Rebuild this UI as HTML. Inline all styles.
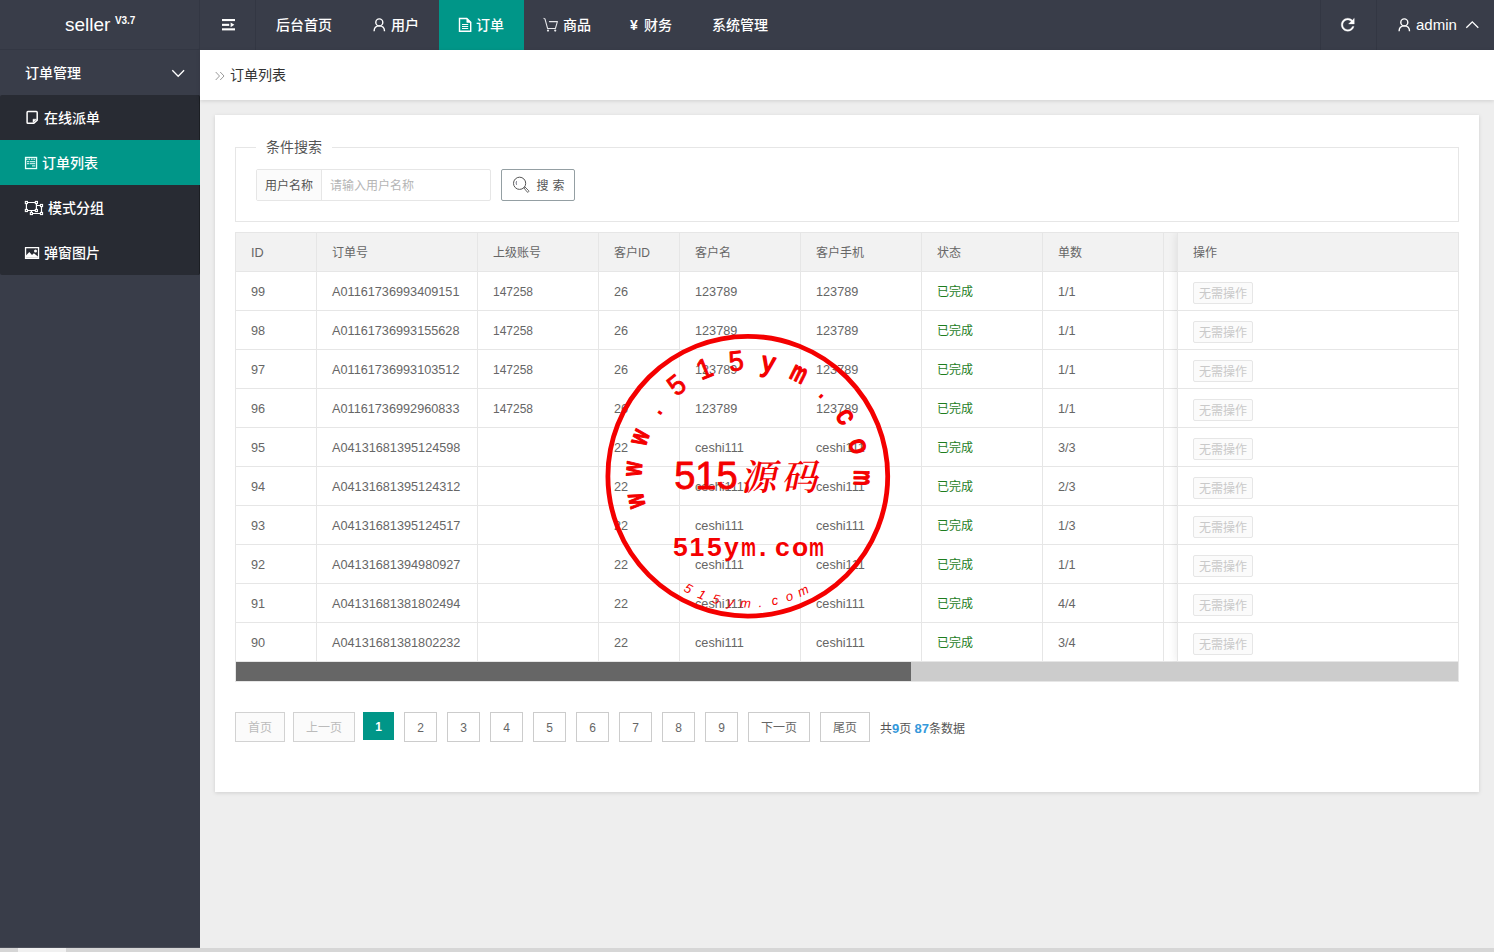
<!DOCTYPE html>
<html lang="zh-CN">
<head>
<meta charset="utf-8">
<title>seller V3.7 - 订单列表</title>
<style>
*{box-sizing:border-box;margin:0;padding:0}
html,body{width:1494px;height:952px;overflow:hidden}
body{position:relative;background:#eeeeee;font-family:"Liberation Sans","Noto Sans CJK SC",sans-serif;font-size:14px;color:#555;-webkit-font-smoothing:antialiased}
svg{display:block}
/* header */
#hd{position:absolute;left:0;top:0;width:1494px;height:50px;background:#393D49}
#logo{position:absolute;left:0;top:0;width:200px;height:50px;color:#fff;border-right:1px solid #333743;border-bottom:1px solid #333743}
#logo .nm{position:absolute;left:65px;top:12px;font-size:19px;line-height:26px;letter-spacing:0}
#logo .ver{position:absolute;left:115px;top:14px;font-size:10px;line-height:14px;font-weight:bold;letter-spacing:-0.1px}
#tog{position:absolute;left:200px;top:0;width:56px;height:50px;border-right:1px solid #333743}
.nv{position:absolute;top:0;height:50px;line-height:50px;color:#fff;font-size:14px;white-space:nowrap;font-weight:500}
.nv.on{background:#009688}
.nv svg{position:absolute}
.nv span{position:absolute;top:0}
#rf{position:absolute;left:1320px;top:0;width:57px;height:50px;border-left:1px solid #333743;border-right:1px solid #333743}
/* sidebar */
#sd{position:absolute;left:0;top:50px;width:200px;height:898px;background:#393D49;border-bottom:1px solid #4b4e59}
#sd .grp{position:absolute;left:0;top:0;width:200px;height:45px;line-height:45px;color:#fff;font-size:14px;font-weight:500}
#sd .grp span{position:absolute;left:25px;top:1px}
#sd .sub{position:absolute;left:0;top:45px;width:200px;height:180px;background:#282B33;border-radius:2px;border-right:1px solid rgba(0,0,0,.3)}
#sd .it{position:absolute;left:0;width:199px;height:45px;line-height:45px;color:#fff;font-size:14px;font-weight:500}
#sd .it.on{background:#009688;width:200px}
#sd .it svg{position:absolute}
#sd .it span{position:absolute;top:1px}
/* crumb */
#cr{position:absolute;left:200px;top:50px;width:1294px;height:50px;background:#fff;box-shadow:0 1px 4px rgba(0,0,0,.13);line-height:50px;font-size:14px;color:#333}
#cr span{position:absolute;left:30px;top:0}
/* card */
#card{position:absolute;left:215px;top:115px;width:1264px;height:677px;background:#fff;box-shadow:0 1px 4px rgba(0,0,0,.13)}
#fs{position:absolute;left:20px;top:32px;width:1224px;height:75px;border:1px solid #e6e6e6}
#fs .lg{position:absolute;left:20px;top:-12px;height:22px;line-height:22px;padding:0 10px;background:#fff;font-size:14px;color:#555}
#ig{position:absolute;left:20px;top:21px;width:235px;height:32px;border:1px solid #e6e6e6;border-radius:2px;background:#fff}
#ig .lb{position:absolute;left:0;top:0;width:65px;height:30px;line-height:32px;background:#FBFBFB;border-right:1px solid #e6e6e6;font-size:12px;color:#555;text-align:center}
#ig .ph{position:absolute;left:73px;top:0;height:30px;line-height:32px;font-size:12px;color:#b5b5b5}
#sb{position:absolute;left:265px;top:21px;width:74px;height:32px;border:1px solid #949fa3;border-radius:2px;background:#fff;font-size:12px;color:#555;line-height:32px}
#sb svg{position:absolute;left:10px;top:6px}
#sb span{position:absolute;left:34.5px;top:0;letter-spacing:4px}
/* table */
#tb{position:absolute;left:20px;top:117px;width:1224px;height:450px;border:1px solid #e6e6e6;background:#fff;overflow:hidden;font-size:12px;color:#666}
#tb .hr{position:absolute;left:0;top:0;width:1222px;height:39px;background:#f2f2f2;border-bottom:1px solid #e6e6e6}
#tb .r{position:absolute;left:0;width:1222px;height:39px;border-bottom:1px solid #e6e6e6}
#tb .c{position:absolute;top:0;height:38px;line-height:40px;padding-left:15px;border-right:1px solid #e6e6e6;white-space:nowrap;overflow:hidden}
.c1{left:0;width:81px}.c2{left:81px;width:161px}.c3{left:242px;width:121px}.c4{left:363px;width:81px}.c5{left:444px;width:121px}.c6{left:565px;width:121px}.c7{left:686px;width:121px}.c8{left:807px;width:121px}
.ok{color:#1e7d1e}
#tb .n{font-size:12.7px}
#fx{position:absolute;left:941px;top:0;width:281px;height:429px;border-left:1px solid #e6e6e6;box-shadow:-1px 0 8px rgba(0,0,0,.08);background:#fff}
#fx .fh{position:absolute;left:0;top:0;width:280px;height:39px;background:#f2f2f2;border-bottom:1px solid #e6e6e6;line-height:40px;padding-left:15px}
#fx .fr{position:absolute;left:0;width:280px;height:39px;border-bottom:1px solid #e6e6e6}
#fx .bt{position:absolute;left:15px;top:10px;width:60px;height:22px;line-height:23px;border:1px solid #e6e6e6;border-radius:2px;background:#FBFBFB;color:#C9C9C9;font-size:12px;text-align:center}
#scr{position:absolute;left:0;top:429px;width:1222px;height:19px;background:#ccc}
#scr i{position:absolute;left:0;top:0;width:675px;height:19px;background:#666}
/* pager */
.pg{position:absolute;top:597px;height:30px;line-height:30px;border:1px solid #ccc;background:#fff;color:#666;font-size:12px;text-align:center}
.pg.dis{background:#FBFBFB;color:#bbb;border-color:#d2d2d2}
.pg.cur{background:#009688;color:#fff;border:0;height:28px;line-height:30px;font-weight:bold}
#tot{position:absolute;left:665px;top:597px;height:30px;line-height:34px;font-size:12px;color:#555;white-space:nowrap}
#tot b{color:#3498db;font-size:13px}
#bs{position:absolute;left:0;top:948px;width:1494px;height:4px;background:#d6d6d6}
#bs i{position:absolute;left:18px;top:0;width:48px;height:4px;background:#f1f1f1}
#stamp{position:absolute;left:598px;top:326px;width:300px;height:300px}
</style>
</head>
<body>
<div id="hd">
  <div id="logo"><span class="nm">seller</span><span class="ver">V3.7</span></div>
  <div id="tog"><svg style="position:absolute;left:22px;top:19px" width="14" height="12" viewBox="0 0 14 12" fill="#fff"><rect x="0" y="0" width="13" height="2.1"/><rect x="0" y="4.8" width="7.2" height="2.1"/><path d="M8.6 3.5L12.4 5.85L8.6 8.2Z"/><rect x="0" y="9.3" width="13" height="2.1"/></svg></div>
  <div class="nv" style="left:256px;width:96px"><span style="left:20px">后台首页</span></div>
  <div class="nv" style="left:352px;width:87px"><svg style="left:21px;top:18px" width="13" height="14" viewBox="0 0 13 14" fill="none" stroke="#fff" stroke-width="1.4"><circle cx="6.3" cy="4.4" r="3.5"/><path d="M1.1 13.2C1.1 9.6 3.4 7.9 6.3 7.9S11.5 9.6 11.5 13.2"/></svg><span style="left:39px">用户</span></div>
  <div class="nv on" style="left:439px;width:85px"><svg style="left:19px;top:17px" width="14" height="16" viewBox="0 0 14 16" fill="none" stroke="#fff"><path d="M1.5 1.5H8.8L12.7 5.4V14.2H1.5Z" stroke-width="1.4" stroke-linejoin="miter"/><path d="M8.8 1.5V5.4H12.7Z" fill="#fff" stroke-width="0.6"/><path d="M4 7.5H10.2M4 9.5H10.2M4 11.5H10.2" stroke-width="1"/></svg><span style="left:37px">订单</span></div>
  <div class="nv" style="left:524px;width:87px"><svg style="left:19px;top:17px" width="16" height="16" viewBox="0 0 16 16" fill="none" stroke="#e6e7ea" stroke-width="1.05" stroke-linecap="round" stroke-linejoin="round"><path d="M0.9 1.4L2 2L4.6 11.5H12.4L14.4 4.6H6.4"/><circle cx="5" cy="13.6" r="1.1" fill="#e6e7ea" stroke="none"/><circle cx="12.2" cy="13.6" r="1.1" fill="#e6e7ea" stroke="none"/></svg><span style="left:39px">商品</span></div>
  <div class="nv" style="left:611px;width:81px"><span style="left:19px;font-weight:bold;font-size:14px">¥</span><span style="left:33px">财务</span></div>
  <div class="nv" style="left:692px;width:96px"><span style="left:20px">系统管理</span></div>
  <div id="rf"><svg style="position:absolute;left:17.3px;top:15.1px" width="19.5" height="19.5" viewBox="0 0 24 24" fill="#fff"><path d="M17.65 6.35C16.2 4.9 14.21 4 12 4c-4.42 0-7.99 3.58-7.99 8s3.57 8 7.99 8c3.73 0 6.84-2.55 7.73-6h-2.08c-.82 2.33-3.04 4-5.65 4-3.31 0-6-2.69-6-6s2.69-6 6-6c1.66 0 3.14.69 4.22 1.78L13 11h7V4l-2.35 2.35z" stroke="#fff" stroke-width="0.4"/></svg></div>
  <div class="nv" style="left:1377px;width:117px"><svg style="left:21px;top:18px" width="13" height="14" viewBox="0 0 13 14" fill="none" stroke="#fff" stroke-width="1.4"><circle cx="6.3" cy="4.4" r="3.5"/><path d="M1.1 13.2C1.1 9.6 3.4 7.9 6.3 7.9S11.5 9.6 11.5 13.2"/></svg><span style="left:39px;font-size:15px">admin</span><svg style="left:88px;top:20px" width="15" height="10" viewBox="0 0 15 10" fill="none" stroke="#fff" stroke-width="1.3"><path d="M1.3 7.8L7.3 1.8L13.3 7.8"/></svg></div>
</div>
<div id="sd">
  <div class="grp"><span>订单管理</span><svg style="position:absolute;left:171px;top:19px" width="15" height="10" viewBox="0 0 15 10" fill="none" stroke="#fff" stroke-width="1.3"><path d="M1.3 1.3L7.2 7.3L13.1 1.3"/></svg></div>
  <div class="sub">
    <div class="it" style="top:0"><svg style="left:26px;top:15px" width="13" height="15" viewBox="0 0 13 15" fill="none" stroke="#fff" stroke-width="1.5"><path d="M1.9 1.6H10.3Q11.2 1.6 11.2 2.5V10.2L7.8 13.3H1.9Q1.1 13.3 1.1 12.5V2.5Q1.1 1.6 1.9 1.6Z"/><path d="M7 9.2H10.6L7 12.6Z" fill="#fff" stroke-width="0.5"/></svg><span style="left:44px">在线派单</span></div>
    <div class="it on" style="top:45px"><svg style="left:24px;top:16px" width="14" height="14" viewBox="0 0 14 14" fill="none" stroke="#e8fffb" stroke-width="1.3"><rect x="1.55" y="1.45" width="11" height="11.1"/><path d="M2 3.2H12" stroke-width="1.6" stroke-dasharray="1.6 0.9" opacity=".75"/><path d="M2.9 5.7H5M5.6 5.7H11.2M2.9 7.7H5M5.6 7.7H11.2M8 9.9H11.2" stroke-width="1"/></svg><span style="left:42px">订单列表</span></div>
    <div class="it" style="top:90px"><svg style="left:24px;top:14px" width="20" height="17" viewBox="0 0 20 17" fill="none" stroke="#fff" stroke-width="1.2"><path d="M2.4 3.5H12.4V11.5H2.4ZM12.4 6.5H17.5V14.5H7.4V11.5"/><g fill="#fff" stroke="none"><rect x="0.8" y="1.9" width="3.2" height="3.2"/><rect x="10.8" y="1.9" width="3.2" height="3.2"/><rect x="0.8" y="9.9" width="3.2" height="3.2"/><rect x="10.8" y="9.9" width="3.2" height="3.2"/><rect x="15.9" y="4.9" width="3.2" height="3.2"/><rect x="15.9" y="12.9" width="3.2" height="3.2"/><rect x="5.8" y="12.9" width="3.2" height="3.2"/></g><g fill="#282B33" stroke="none"><circle cx="2.4" cy="3.5" r="0.6"/><circle cx="12.4" cy="3.5" r="0.6"/><circle cx="2.4" cy="11.5" r="0.6"/><circle cx="12.4" cy="11.5" r="0.6"/><circle cx="17.5" cy="6.5" r="0.6"/><circle cx="17.5" cy="14.5" r="0.6"/><circle cx="7.4" cy="14.5" r="0.6"/></g></svg><span style="left:48px">模式分组</span></div>
    <div class="it" style="top:135px"><svg style="left:24px;top:16px" width="16" height="14" viewBox="0 0 16 14" fill="none" stroke="#fff" stroke-width="1.3"><rect x="1.55" y="1.65" width="13" height="10.7"/><path d="M2 11.8V9.4L5.3 5.9L8 9L9.9 7.3L14 10.6V11.8Z" fill="#fff" stroke="none"/><circle cx="11.5" cy="5" r="1.5" fill="#fff" stroke="none"/></svg><span style="left:44px">弹窗图片</span></div>
  </div>
</div>
<div id="cr"><svg style="position:absolute;left:15px;top:21px" width="11" height="10" viewBox="0 0 11 10" fill="none" stroke="#9a9a9a" stroke-width="1"><path d="M0.7 1L4.5 5L0.7 9M5.2 1L9 5L5.2 9"/></svg><span>订单列表</span></div>
<div id="card">
  <div id="fs"><div class="lg">条件搜索</div>
    <div id="ig"><div class="lb">用户名称</div><div class="ph">请输入用户名称</div></div>
    <div id="sb"><svg width="18" height="18" viewBox="0 0 18 18" fill="none" stroke="#555" stroke-width="1"><circle cx="7.6" cy="7.3" r="6.1"/><path d="M4.6 5.2Q3.6 7 4.6 8.8" stroke-width="0.9" stroke="#667"/><path d="M11.9 11.9L12.9 10.9L16.7 14.7Q17.1 15.6 16.2 16.2Q15.5 16.4 15.1 15.9L11.9 11.9" stroke-width="0.9" fill="#fff"/></svg><span>搜索</span></div>
  </div>
  <div id="tb">
    <div class="hr"><div class="c c1 n">ID</div><div class="c c2">订单号</div><div class="c c3">上级账号</div><div class="c c4">客户ID</div><div class="c c5">客户名</div><div class="c c6">客户手机</div><div class="c c7">状态</div><div class="c c8">单数</div></div>
    <div class="r" style="top:39px"><div class="c c1 n">99</div><div class="c c2 n">A01161736993409151</div><div class="c c3">147258</div><div class="c c4 n">26</div><div class="c c5 n">123789</div><div class="c c6 n">123789</div><div class="c c7 ok">已完成</div><div class="c c8 n">1/1</div></div>
    <div class="r" style="top:78px"><div class="c c1 n">98</div><div class="c c2 n">A01161736993155628</div><div class="c c3">147258</div><div class="c c4 n">26</div><div class="c c5 n">123789</div><div class="c c6 n">123789</div><div class="c c7 ok">已完成</div><div class="c c8 n">1/1</div></div>
    <div class="r" style="top:117px"><div class="c c1 n">97</div><div class="c c2 n">A01161736993103512</div><div class="c c3">147258</div><div class="c c4 n">26</div><div class="c c5 n">123789</div><div class="c c6 n">123789</div><div class="c c7 ok">已完成</div><div class="c c8 n">1/1</div></div>
    <div class="r" style="top:156px"><div class="c c1 n">96</div><div class="c c2 n">A01161736992960833</div><div class="c c3">147258</div><div class="c c4 n">26</div><div class="c c5 n">123789</div><div class="c c6 n">123789</div><div class="c c7 ok">已完成</div><div class="c c8 n">1/1</div></div>
    <div class="r" style="top:195px"><div class="c c1 n">95</div><div class="c c2 n">A04131681395124598</div><div class="c c3"></div><div class="c c4 n">22</div><div class="c c5 n">ceshi111</div><div class="c c6 n">ceshi111</div><div class="c c7 ok">已完成</div><div class="c c8 n">3/3</div></div>
    <div class="r" style="top:234px"><div class="c c1 n">94</div><div class="c c2 n">A04131681395124312</div><div class="c c3"></div><div class="c c4 n">22</div><div class="c c5 n">ceshi111</div><div class="c c6 n">ceshi111</div><div class="c c7 ok">已完成</div><div class="c c8 n">2/3</div></div>
    <div class="r" style="top:273px"><div class="c c1 n">93</div><div class="c c2 n">A04131681395124517</div><div class="c c3"></div><div class="c c4 n">22</div><div class="c c5 n">ceshi111</div><div class="c c6 n">ceshi111</div><div class="c c7 ok">已完成</div><div class="c c8 n">1/3</div></div>
    <div class="r" style="top:312px"><div class="c c1 n">92</div><div class="c c2 n">A04131681394980927</div><div class="c c3"></div><div class="c c4 n">22</div><div class="c c5 n">ceshi111</div><div class="c c6 n">ceshi111</div><div class="c c7 ok">已完成</div><div class="c c8 n">1/1</div></div>
    <div class="r" style="top:351px"><div class="c c1 n">91</div><div class="c c2 n">A04131681381802494</div><div class="c c3"></div><div class="c c4 n">22</div><div class="c c5 n">ceshi111</div><div class="c c6 n">ceshi111</div><div class="c c7 ok">已完成</div><div class="c c8 n">4/4</div></div>
    <div class="r" style="top:390px"><div class="c c1 n">90</div><div class="c c2 n">A04131681381802232</div><div class="c c3"></div><div class="c c4 n">22</div><div class="c c5 n">ceshi111</div><div class="c c6 n">ceshi111</div><div class="c c7 ok">已完成</div><div class="c c8 n">3/4</div></div>
    <div id="fx"><div class="fh">操作</div>
    <div class="fr" style="top:39px"><div class="bt">无需操作</div></div>
    <div class="fr" style="top:78px"><div class="bt">无需操作</div></div>
    <div class="fr" style="top:117px"><div class="bt">无需操作</div></div>
    <div class="fr" style="top:156px"><div class="bt">无需操作</div></div>
    <div class="fr" style="top:195px"><div class="bt">无需操作</div></div>
    <div class="fr" style="top:234px"><div class="bt">无需操作</div></div>
    <div class="fr" style="top:273px"><div class="bt">无需操作</div></div>
    <div class="fr" style="top:312px"><div class="bt">无需操作</div></div>
    <div class="fr" style="top:351px"><div class="bt">无需操作</div></div>
    <div class="fr" style="top:390px"><div class="bt">无需操作</div></div>
    </div>
    <div id="scr"><i></i></div>
  </div>
  <div class="pg dis" style="left:20px;width:50px">首页</div>
  <div class="pg dis" style="left:78px;width:62px">上一页</div>
  <div class="pg cur" style="left:148px;width:31px">1</div>
  <div class="pg" style="left:189px;width:33px">2</div>
  <div class="pg" style="left:232px;width:33px">3</div>
  <div class="pg" style="left:275px;width:33px">4</div>
  <div class="pg" style="left:318px;width:33px">5</div>
  <div class="pg" style="left:361px;width:33px">6</div>
  <div class="pg" style="left:404px;width:33px">7</div>
  <div class="pg" style="left:447px;width:33px">8</div>
  <div class="pg" style="left:490px;width:33px">9</div>
  <div class="pg" style="left:533px;width:62px">下一页</div>
  <div class="pg" style="left:605px;width:50px">尾页</div>
  <div id="tot">共<b>9</b>页 <b>87</b>条数据</div>
</div>
<svg id="stamp" viewBox="0 0 300 300" width="300" height="300" fill="#f40000" stroke="#f40000" stroke-width="0" stroke-linejoin="round">
<circle cx="149.8" cy="150.2" r="139.9" fill="none" stroke-width="4.8"/>
<g font-family="Liberation Sans, sans-serif" font-size="28" text-anchor="middle">
<text transform="translate(46.0 173.0) rotate(-102.4) scale(0.66 1)" font-weight="bold" stroke-width="1.3">w</text>
<text transform="translate(43.7 143.3) rotate(-86.3) scale(0.66 1)" font-weight="bold" stroke-width="1.3">w</text>
<text transform="translate(49.8 114.2) rotate(-70.2) scale(0.66 1)" font-weight="bold" stroke-width="1.3">w</text>
<text transform="translate(63.7 87.9) rotate(-54.1) scale(0.75 1)" font-weight="bold">.</text>
<text transform="translate(84.4 66.4) rotate(-38.0) scale(0.95 1)" stroke-width="0.9">5</text>
<text transform="translate(110.2 51.6) rotate(-21.9) scale(0.95 1)" stroke-width="0.9">1</text>
<text transform="translate(139.1 44.4) rotate(-5.8) scale(0.95 1)" stroke-width="0.9">5</text>
<text transform="translate(168.8 45.6) rotate(10.3) scale(0.93 1)" stroke-width="1.6">y</text>
<text transform="translate(197.1 55.0) rotate(26.4) scale(0.62 1)" font-weight="bold" stroke-width="1.3">m</text>
<text transform="translate(221.6 71.8) rotate(42.5) scale(0.75 1)" font-weight="bold">.</text>
<text transform="translate(240.5 94.8) rotate(58.6) scale(0.93 1)" stroke-width="1.6">c</text>
<text transform="translate(252.3 122.2) rotate(74.7) scale(0.93 1)" stroke-width="1.6">o</text>
<text transform="translate(256.1 151.7) rotate(90.8) scale(0.62 1)" font-weight="bold" stroke-width="1.3">m</text>
</g>
<g font-family="Liberation Sans, sans-serif" font-style="italic" font-size="13" text-anchor="middle">
<text transform="translate(88.3 266.4) rotate(27.9)">5</text>
<text transform="translate(102.2 272.8) rotate(21.2)">1</text>
<text transform="translate(116.9 277.5) rotate(14.5)">5</text>
<text transform="translate(132.0 280.5) rotate(7.8)">y</text>
<text transform="translate(147.3 281.7) rotate(1.1)">m</text>
<text transform="translate(162.6 281.1) rotate(-5.6)">.</text>
<text transform="translate(177.8 278.7) rotate(-12.3)">c</text>
<text transform="translate(192.6 274.5) rotate(-19.0)">o</text>
<text transform="translate(206.8 268.7) rotate(-25.7)">m</text>
</g>
<text x="76.2" y="163.3" font-family="Liberation Sans, sans-serif" font-size="38" textLength="63.5" lengthAdjust="spacingAndGlyphs" stroke-width="0.8">515</text>
<text transform="translate(142.5 163.5) skewX(-12)" font-family="Liberation Serif, Noto Serif CJK SC, serif" font-weight="600" font-size="36" textLength="77" lengthAdjust="spacing">源码</text>
<text y="229.9" font-family="Liberation Sans, sans-serif" font-weight="bold" font-size="26.5"><tspan x="75.0">5</tspan><tspan x="91.5">1</tspan><tspan x="109.0">5</tspan><tspan x="126.0">y</tspan><tspan x="143.0" textLength="15" lengthAdjust="spacingAndGlyphs">m</tspan><tspan x="161.0">.</tspan><tspan x="177.0">c</tspan><tspan x="194.0">o</tspan><tspan x="211.0" textLength="15" lengthAdjust="spacingAndGlyphs">m</tspan></text>
</svg>
<div id="bs"><i></i></div>
</body>
</html>
